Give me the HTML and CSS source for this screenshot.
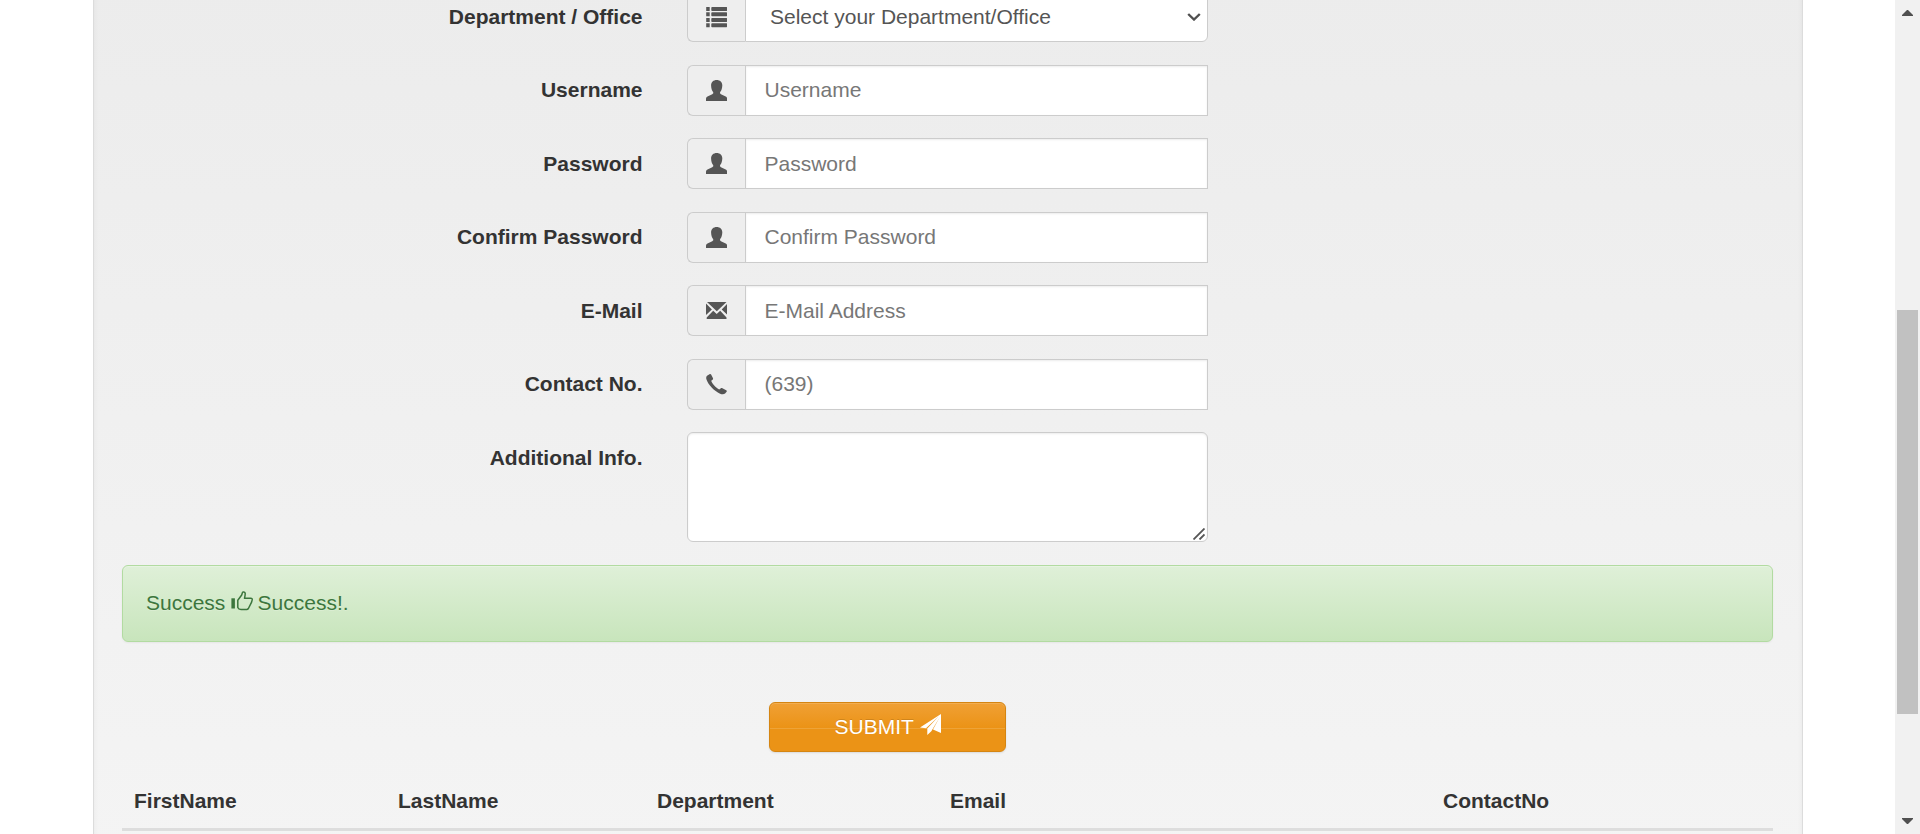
FILE: index.html
```html
<!DOCTYPE html>
<html lang="en">
<head>
<meta charset="utf-8">
<title>Registration</title>
<link rel="stylesheet" href="styles.css">
</head>
<body>
<svg class="defs" aria-hidden="true">
  <symbol id="user" viewBox="0 0 21 21"><path d="M10.700 0C14 0 16.300 2.200 16.300 5.500c0 1.700-.4 3-.8 4.300-.5 1.400-1.500 2-1.500 3 0 1 .8 1.400 1.500 1.700l4.200 2.100c1.100.6 1.500 1.300 1.500 2.400V21H0v-2c0-1.100.4-1.800 1.500-2.400l4.200-2.100c.7-.3 1.600-.7 1.600-1.700 0-1-1-1.600-1.500-3-.4-1.300-.7-2.600-.7-4.300C5.100 2.200 7.400 0 10.700 0z"/></symbol>
  <symbol id="list" viewBox="0 0 21 21"><path d="M.2 0h3.500v4H.2zM.2 5.300h3.500v4H.2zM.2 11h3.500v4H.2zM.2 16.200h3.500v4H.2zM6 0h14.600l.6.5v3l-.6.5H6l-.7-.5V.5zM6 5.300h14.600l.6.5v3l-.6.5H6l-.7-.5v-3zM6 11h14.600l.6.5v3l-.6.5H6l-.7-.5v-3zM6 16.200h14.600l.6.5v3l-.6.5H6l-.7-.5v-3z"/></symbol>
  <symbol id="mail" viewBox="0 0 21 21"><path d="M1 2h19.500l-9.700 9.200zM0 3.500l5.900 6L0 15zM21.400 3.500V15l-5.700-5.500zM7.200 10.800l3.500 3.200 3.500-3.200 6.300 6.700V19H.7v-1.500z"/></symbol>
  <symbol id="phone" viewBox="0 0 21 21"><path d="M1.400 1.600 3.500.2c.7-.4 1.200-.2 1.600.4l1.800 3.500c.3.600.2 1.200-.3 1.600L5.200 6.800c.7 2.500 4.800 7.200 8 8.600l1.700-1.200c.5-.3 1-.3 1.500 0l3.800 2c.7.4.9.9.4 1.600l-1.500 1.800c-1.200 1-3.200 1-5 .1C8.300 17.200 2.100 10.800.4 5.300 0 3.700.2 2.400 1.400 1.600z"/></symbol>
  <symbol id="thumb" viewBox="0 0 22 21"><path d="M.4 7.300h3.500v10.200H.4z"/><path d="M6.800 9.300 10.700 4l.8-2.600c.2-.6 2.200-.7 2.600.5.400 1.200-.1 3-.6 5.300h6.200c1.200.1 1.700.8 1.500 1.700l-.6 2.200-3.200 6.400c-.5.700-1 1-1.700 1H10c-1.500 0-2.800-.9-3.200-2z" fill="none" stroke="currentColor" stroke-width="1.500" stroke-linejoin="round"/></symbol>
  <symbol id="send" viewBox="0 0 21 21"><path d="M21 0v19l-8-3.400L19.800 3 11.300 17.200 7.300 21v-6.500L18.800 2.200 6 14.200 0 13.400z"/></symbol>
</svg>

<div class="viewport">
  <main class="page">
    <form class="well">
      <div class="row">
        <label class="label">Department / Office</label>
        <div class="group">
          <span class="addon"><svg class="icon icon-list"><use href="#list"/></svg></span>
          <div class="control select"><span>Select your Department/Office</span><svg class="chevron" viewBox="0 0 14 8"><path d="M1.200 1 7 6.500 12.800 1"/></svg></div>
        </div>
      </div>
      <div class="row">
        <label class="label">Username</label>
        <div class="group"><span class="addon"><svg class="icon"><use href="#user"/></svg></span><input class="control" placeholder="Username"></div>
      </div>
      <div class="row">
        <label class="label">Password</label>
        <div class="group"><span class="addon"><svg class="icon"><use href="#user"/></svg></span><input class="control" placeholder="Password"></div>
      </div>
      <div class="row">
        <label class="label">Confirm Password</label>
        <div class="group"><span class="addon"><svg class="icon"><use href="#user"/></svg></span><input class="control" placeholder="Confirm Password"></div>
      </div>
      <div class="row">
        <label class="label">E-Mail</label>
        <div class="group"><span class="addon"><svg class="icon"><use href="#mail"/></svg></span><input class="control" placeholder="E-Mail Address"></div>
      </div>
      <div class="row">
        <label class="label">Contact No.</label>
        <div class="group"><span class="addon"><svg class="icon"><use href="#phone"/></svg></span><input class="control" placeholder="(639)"></div>
      </div>
      <div class="row row-area">
        <label class="label">Additional Info.</label>
        <div class="area"><svg class="grip" viewBox="0 0 12 12"><path d="M.5 11.500 11.500.5M6.500 11.500l5-5"/></svg></div>
      </div>
      <div class="alert">Success <svg class="thumb"><use href="#thumb"/></svg> Success!.</div>
      <button class="submit" type="button">SUBMIT <svg class="send"><use href="#send"/></svg></button>
      <table class="table">
        <colgroup><col class="c1"><col class="c2"><col class="c3"><col class="c4"><col></colgroup>
        <thead><tr><th>FirstName</th><th>LastName</th><th>Department</th><th>Email</th><th>ContactNo</th></tr></thead>
      </table>
    </form>
  </main>
  <div class="scrollbar">
    <svg class="arrow" viewBox="0 0 11 6"><path d="M0 6V5L5 0h1l5 5v1z"/></svg>
    <div class="thumb-bar"></div>
    <svg class="arrow arrow-down" viewBox="0 0 11 6"><path d="M0 0v1l5 5h1l5-5V0z"/></svg>
  </div>
</div>
</body>
</html>
```

FILE: styles.css
```css
* { box-sizing: border-box; }

body {
  margin: 0;
  overflow: hidden;
  background: #fff;
  color: #333;
  font: 21px/30px "Liberation Sans", Arial, sans-serif;
}

.defs { display: none; }

.viewport {
  display: flex;
  height: 834px;
  overflow: hidden;
}

.page {
  flex: 1;
  padding: 0 92px 0 93px;
}

.well {
  height: 874px;
  margin-top: -20px;
  padding: 11px 29px 0 28px;
  border: solid #dcdcdc;
  border-width: 0 1px;
  background: linear-gradient(#ececec, #f4f4f4);
  box-shadow: inset 0 2px 5px rgba(0, 0, 0, .05);
}

.row {
  display: flex;
  gap: 44.5px;
  height: 51px;
  margin-bottom: 22.5px;
}

.label {
  width: 520.5px;
  padding-top: 10.75px;
  font-weight: bold;
  text-align: right;
}

.group {
  display: flex;
  width: 521px;
}

.addon {
  display: flex;
  align-items: center;
  justify-content: center;
  width: 58px;
  border: 1px solid #ccc;
  border-right: 0;
  border-radius: 6px 0 0 6px;
  background: #eee;
  color: #555;
}

.icon {
  width: 21px;
  height: 21px;
  overflow: visible;
  fill: currentColor;
}

.icon-list { margin-top: 2px; }

.control {
  flex: 1;
  min-width: 0;
  margin: 0;
  padding: 0 18px 0 18.5px;
  border: 1px solid #ccc;
  border-radius: 0;
  background: #fff;
  box-shadow: inset 0 1px 2px rgba(0, 0, 0, .075);
  color: #555;
  font: inherit;
}

.control::placeholder { color: #777; }

.select {
  display: flex;
  align-items: center;
  justify-content: space-between;
  padding: 0 6px 0 24px;
  border-radius: 0 6px 6px 0;
  box-shadow: none;
}

.chevron {
  width: 14px;
  height: 8px;
  fill: none;
  stroke: #505050;
  stroke-width: 2.4;
}

.row-area {
  height: 110px;
  margin-bottom: 23px;
}

.area {
  display: flex;
  align-items: flex-end;
  justify-content: flex-end;
  width: 521px;
  padding: 1px 2px;
  border: 1px solid #ccc;
  border-radius: 6px;
  background: #fff;
  box-shadow: inset 0 1px 2px rgba(0, 0, 0, .075);
}

.grip {
  width: 12px;
  height: 12px;
  stroke: #555;
  stroke-width: 1.8;
}

.alert {
  height: 77px;
  padding: 22px 23px;
  border: 1px solid #b2dba1;
  border-radius: 6px;
  background: linear-gradient(#dff0d8, #c8e5bc);
  box-shadow: inset 0 1px 0 rgba(255, 255, 255, .25), 0 1px 2px rgba(0, 0, 0, .05);
  color: #3c763d;
  text-shadow: 0 1px 0 rgba(255, 255, 255, .2);
}

.thumb {
  width: 22px;
  height: 21px;
  margin: 0 -1px 0 -.5px;
  fill: currentColor;
  vertical-align: -2px;
}

.submit {
  display: block;
  width: 237px;
  height: 50px;
  margin: 60px 0 0 647px;
  padding: 0;
  border: 1px solid #d58512;
  border-radius: 6px;
  background: linear-gradient(#f0a035 0, #eb9316 25px, #eea337 25px, #eea337 26px, #eb9316 26px);
  box-shadow: inset 0 1px 0 rgba(255, 255, 255, .15), 0 1px 2px rgba(0, 0, 0, .1);
  color: #fff;
  font: inherit;
  text-shadow: 0 -1px 0 rgba(0, 0, 0, .15);
}

.send {
  width: 21px;
  height: 21px;
  margin: 0 -1px 0 1px;
  fill: currentColor;
  vertical-align: -1px;
}

.table {
  width: 1651px;
  margin-top: 20px;
  border-collapse: collapse;
  table-layout: fixed;
}

.c1 { width: 264px; }
.c2 { width: 259px; }
.c3 { width: 293px; }
.c4 { width: 493px; }

.table th {
  height: 57px;
  padding: 14px 12px 12px;
  border-bottom: 3px solid #ddd;
  text-align: left;
}

.scrollbar {
  display: flex;
  flex-direction: column;
  align-items: center;
  width: 25px;
  padding: 10px 0;
  background: #f1f1f1;
}

.arrow {
  width: 11px;
  height: 6px;
  fill: #505050;
}

.thumb-bar {
  width: 21px;
  height: 404px;
  margin-top: 294px;
  background: #c1c1c1;
}

.arrow-down { margin-top: auto; }
```
